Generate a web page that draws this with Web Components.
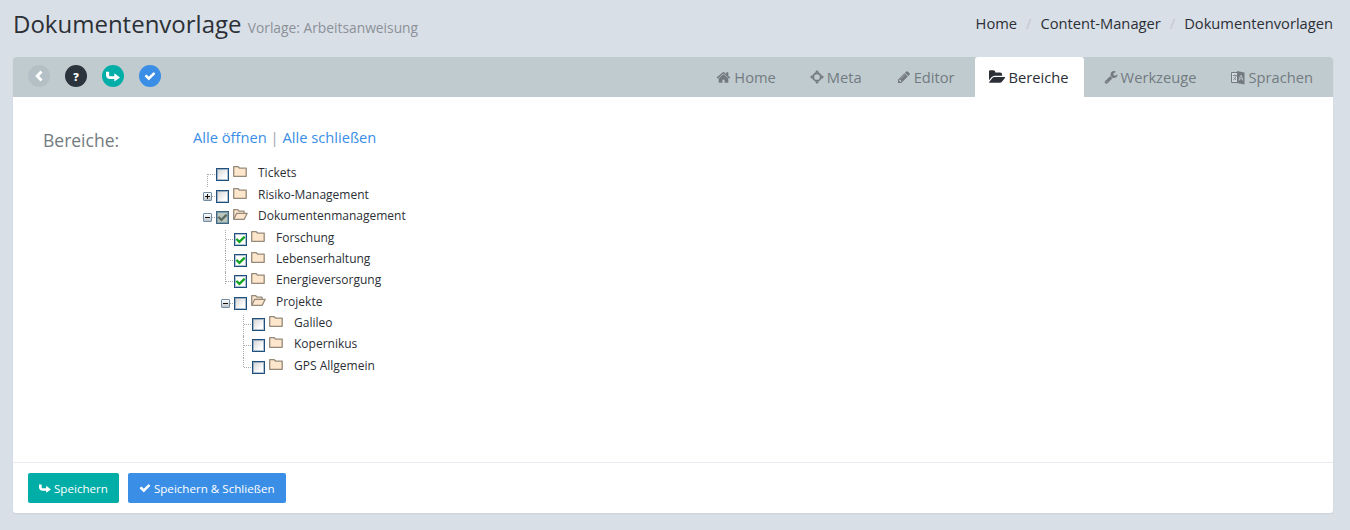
<!DOCTYPE html>
<html lang="de">
<head>
<meta charset="utf-8">
<title>Dokumentenvorlage</title>
<style>
  html, body { height: 100%; }
  body {
    margin: 0;
    background: #d9dfe7;
    color: #2b2f36;
    font-family: "Open Sans", sans-serif;
  }
</style>
</head>
<body>
<template-page></template-page>

<script>
const ICONS = {
  home: "M1472 992v480q0 26-19 45t-45 19h-384v-384h-256v384h-384q-26 0-45-19t-19-45v-480q0-1 .5-3t.5-3l575-474 575 474q1 2 1 6zm223-69l-62 74q-8 9-21 11h-3q-13 0-21-7l-692-577-692 577q-12 8-24 7-13-2-21-11l-62-74q-8-10-7-23.5t11-21.5l719-599q32-26 76-26t76 26l244 204v-195q0-14 9-23t23-9h192q14 0 23 9t9 23v408l219 182q10 8 11 21.5t-7 23.5z",
  pencil: "M491 1536l91-91-235-235-91 91v107h128v128h107zm523-928q0-22-22-22-10 0-17 7l-542 542q-7 7-7 17 0 22 22 22 10 0 17-7l542-542q7-7 7-17zm-54-192l416 416-832 832h-416v-416zm683 96q0 53-37 90l-166 166-416-416 166-165q36-38 90-38 53 0 91 38l235 234q37 39 37 91z",
  folder: "M1815 952q0 31-31 66l-336 396q-43 51-120.5 86.5t-143.5 35.5h-1088q-34 0-60.5-13t-26.5-43q0-31 31-66l336-396q43-51 120.5-86.5t143.5-35.5h1088q34 0 60.5 13t26.5 43zm-343-344v160h-832q-94 0-197 47.5t-164 119.5l-337 396-5 6q0-4-.5-12.5t-.5-12.5v-960q0-92 66-158t158-66h320q92 0 158 66t66 158v32h544q92 0 158 66t66 158z",
  wrench: "M448 1472q0-26-19-45t-45-19-45 19-19 45 19 45 45 19 45-19 19-45zm644-420l-682 682q-37 37-90 37-52 0-91-37l-106-108q-38-36-38-90 0-53 38-91l681-681q39 98 114.5 173.5t173.5 114.5zm634-435q0 39-23 106-47 134-164.5 217.5t-258.5 83.5q-185 0-316.5-131.5t-131.5-316.5 131.5-316.5 316.5-131.5q58 0 121.5 16.5t107.5 46.5q16 11 16 28t-16 28l-293 169v224l193 107q5-3 79-48.5t135.5-81 70.5-35.5q15 0 23.5 10t8.5 25z",
  check: "M1671 566q0 40-28 68l-724 724-136 136q-28 28-68 28t-68-28l-136-136-362-362q-28-28-28-68t28-68l136-136q28-28 68-28t68 28l294 295 656-657q28-28 68-28t68 28l136 136q28 28 28 68z"
};

const faIcon = (name, size) =>
  `<svg width="${size}" height="${size}" viewBox="0 0 1792 1792" fill="currentColor"><path d="${ICONS[name]}"/></svg>`;

// hooked arrow used on the save buttons
const shareIcon = (w, h) =>
  `<svg width="${w}" height="${h}" viewBox="0 0 16 12" fill="currentColor"><path d="M0 .5h3.600v3.700c0 1 .5 1.500 1.500 1.500H9.500V2.200L16 7.200l-6.500 4.600V8.900H5C1.800 8.900 0 7.100 0 4.600z"/></svg>`;

const metaIcon =
  `<svg width="14" height="14" viewBox="0 0 14 14"><circle cx="7" cy="7" r="3.800" fill="none" stroke="currentColor" stroke-width="1.900"/><path fill="currentColor" d="M7 0l2.200 2.600H4.800zM7 14l-2.200-2.600h4.400zM0 7l2.600-2.200v4.400zM14 7l-2.600 2.200V4.800z"/></svg>`;

const languageIcon =
  `<svg width="14" height="15" viewBox="0 0 14 15"><path d="M.5 2.500h6.500v10H.5z" fill="#d5dcdf" stroke="currentColor"/><path d="M6 1l7.500 1.500v12L6 13z" fill="currentColor"/><path d="M8 10.500l1.500-5h.8l1.500 5M8.600 8.800h2.600" fill="none" stroke="#c0cbd0" stroke-width=".9"/><path d="M1.800 5.500h4M3.800 4.500v1M2.200 10c1.600-.8 2.500-2.300 3-4.500M2.600 7.300c.6 1.100 1.300 2 2.600 2.700" fill="none" stroke="currentColor" stroke-width=".8"/></svg>`;

class TemplatePage extends HTMLElement {
  constructor() {
    super();
    this.attachShadow({ mode: "open" });
    this.shadowRoot.innerHTML = `
      <style>
        :host { display: block; padding: 0 17px 0 13px; }
      </style>
      <page-header></page-header>
      <editor-card></editor-card>
    `;
  }
}

class PageHeader extends HTMLElement {
  constructor() {
    super();
    this.attachShadow({ mode: "open" });
    this.shadowRoot.innerHTML = `
      <style>
        :host {
          display: flex;
          justify-content: space-between;
          align-items: flex-start;
          height: 57px;
        }
        h1 {
          margin: 7px 0 0;
          font-size: 24px;
          line-height: 33px;
          font-weight: 400;
          color: #2b2f36;
        }
        small { font-size: 13.800px; color: #8b9197; }
        ol {
          display: flex;
          margin: 13px 0 0;
          padding: 0;
          list-style: none;
          font-size: 14.700px;
          line-height: 20px;
          color: #2b2f36;
        }
        li + li::before { content: "/"; padding: 0 9px; color: #c3c8ce; }
      </style>
      <h1>Dokumentenvorlage <small>Vorlage: Arbeitsanweisung</small></h1>
      <ol>
        <li>Home</li>
        <li>Content-Manager</li>
        <li>Dokumentenvorlagen</li>
      </ol>
    `;
  }
}

class CircleButton extends HTMLElement {
  constructor() {
    super();
    this.attachShadow({ mode: "open" });
    this.shadowRoot.innerHTML = `
      <style>
        :host {
          display: flex;
          align-items: center;
          justify-content: center;
          width: 22px;
          height: 22px;
          border-radius: 50%;
          color: #fff;
          background: var(--bg, #2b343c);
        }
      </style>
      <slot></slot>
    `;
  }
}

class TabBar extends HTMLElement {
  constructor() {
    super();
    this.attachShadow({ mode: "open" });
    this.shadowRoot.innerHTML = `
      <style>
        :host {
          display: flex;
          justify-content: space-between;
          height: 40px;
          background: #c0cbd0;
          border-radius: 3px 3px 0 0;
        }
        .actions { display: flex; gap: 15px; padding: 8px 0 0 15px; }
        .tabs { display: flex; padding-right: 5px; }
      </style>
      <div class="actions">
        <circle-button style="--bg:#b4c0c6">
          <svg width="11" height="12" viewBox="0 0 11 12"><path d="M7.500 1.500L3.200 6l4.300 4.500" fill="none" stroke="#fff" stroke-width="2.800"/></svg>
        </circle-button>
        <circle-button style="--bg:#2b343c"><span style="font:800 11px 'Open Sans',sans-serif">?</span></circle-button>
        <circle-button style="--bg:#00ada7">${shareIcon(14, 11)}</circle-button>
        <circle-button style="--bg:#3a8ee6">${faIcon("check", 12)}</circle-button>
      </div>
      <div class="tabs">
        <tab-item>${faIcon("home", 15)}Home</tab-item>
        <tab-item style="margin-left:5px">${metaIcon}Meta</tab-item>
        <tab-item>${faIcon("pencil", 14)}Editor</tab-item>
        <tab-item active style="margin-left:5px;gap:4px">${faIcon("folder", 16)}Bereiche</tab-item>
        <tab-item>${faIcon("wrench", 14)}Werkzeuge</tab-item>
        <tab-item>${languageIcon}Sprachen</tab-item>
      </div>
    `;
  }
}

class TabItem extends HTMLElement {
  constructor() {
    super();
    this.attachShadow({ mode: "open" });
    this.shadowRoot.innerHTML = `
      <style>
        :host {
          display: flex;
          align-items: center;
          gap: 3px;
          padding: 0 15px 0 14px;
          margin-left: 6px;
          font-size: 14.700px;
          color: #737b80;
          border-radius: 3px 3px 0 0;
        }
        :host([active]) { background: #fff; color: #2b2f36; }
      </style>
      <slot></slot>
    `;
  }
}

class TreeNode extends HTMLElement {
  static get observedAttributes() {
    return ["label"];
  }

  constructor() {
    super();
    this.attachShadow({ mode: "open" });
    const open = this.hasAttribute("open");
    const toggle = this.getAttribute("toggle");
    const state = this.getAttribute("state");
    const folder = open
      ? `<path d="M1.700 11.300V1.700h4l1.500 1.500h4.800v2.200" fill="#fde6cc"/><path d="M1.700 11.300l3-6h10.500l-3 6z" fill="#fde6cc"/>`
      : `<path d="M1.700 11.300V1.700h4.500l1.500 1.500h6.500v8.100z" fill="#fde6cc"/>`;
    this.shadowRoot.innerHTML = `
      <style>
        :host { display: block; position: relative; }
        :host::before {
          content: "";
          position: absolute;
          left: 9px;
          top: 0;
          bottom: 0;
          border-left: 1px dotted #a4a9ae;
        }
        :host(:last-child)::before { bottom: auto; height: 9px; }
        :host([first])::before { top: 9px; }
        :host([stub])::before { bottom: auto; height: 12px; }
        :host([toggle])::before { display: none; }
        .row {
          display: flex;
          align-items: flex-start;
          height: 21.380px;
          font-size: 12px;
          line-height: 17px;
          color: #2b2f36;
          position: relative;
        }
        .gutter { position: relative; width: 18px; height: 100%; flex: none; }
        .gutter::before {
          content: "";
          position: absolute;
          left: 10px;
          right: 1px;
          top: 9px;
          border-top: 1px dotted #a4a9ae;
        }
        .toggle {
          position: absolute;
          left: 5px;
          top: 5px;
          box-sizing: border-box;
          width: 9px;
          height: 9px;
          border: 1px solid #6f8ba5;
          border-radius: 1px;
          background: linear-gradient(#fff, #bfc5ca);
          display: flex;
          z-index: 1;
        }
        .toggle svg { display: block; }
        .box {
          flex: none;
          box-sizing: border-box;
          width: 13px;
          height: 13px;
          margin-top: 3px;
          border: 1px solid #1f4f7d;
          box-shadow: inset 0 0 0 1px rgba(31, 79, 125, .35);
          background: linear-gradient(135deg, #d2d2d2, #fff 75%);
          display: flex;
          align-items: center;
          justify-content: center;
        }
        .box.checked { background: #fff; color: #12a320; }
        .box.partial { background: #b9c8bf; color: #5e6b63; border-color: #3f6781; }
        .folder { flex: none; margin: 0 0 0 3px; stroke: #95897a; stroke-width: 1.300; stroke-linejoin: round; }
        .label { margin: -1px 0 0 10px; white-space: nowrap; }
        .children { padding-left: 18px; }
      </style>
      <div class="row">
        <div class="gutter">
          ${toggle ? `<span class="toggle"><svg width="7" height="7" viewBox="0 0 7 7"><path d="M1 3.500h5${toggle === "plus" ? "M3.500 1v5" : ""}" stroke="#111" stroke-width="1"/></svg></span>` : ""}
        </div>
        <span class="box ${state || ""}">${state ? faIcon("check", 11) : ""}</span>
        <svg class="folder" width="16" height="13" viewBox="0 0 16 13">${folder}</svg>
        <span class="label"></span>
      </div>
      <div class="children"><slot></slot></div>
    `;
    this.labelEl = this.shadowRoot.querySelector(".label");
  }

  attributeChangedCallback(name, oldValue, newValue) {
    this.labelEl.textContent = newValue;
  }
}

class AreaTree extends HTMLElement {
  constructor() {
    super();
    this.attachShadow({ mode: "open" });
    this.shadowRoot.innerHTML = `
      <style>
        :host { display: block; margin: 0 0 0 5px; }
      </style>
      <slot></slot>
    `;
  }
}

class EditorCard extends HTMLElement {
  constructor() {
    super();
    this.attachShadow({ mode: "open" });
    this.shadowRoot.innerHTML = `
      <style>
        :host {
          display: flex;
          flex-direction: column;
          height: 456px;
          background: #fff;
          border-radius: 3px;
          box-shadow: 0 1px 2px rgba(0, 0, 0, .06);
        }
        .body { flex: 1; display: flex; padding: 29px 30px 0; }
        .title {
          width: 150px;
          flex: none;
          margin-top: 1px;
          font-size: 17.500px;
          line-height: 26px;
          color: #737b80;
        }
        .links {
          font-size: 14.700px;
          line-height: 22px;
          color: #a0a5aa;
          margin-bottom: 17.400px;
        }
        .links a { color: #3a8ee6; text-decoration: none; }
        .footer {
          display: flex;
          gap: 9px;
          padding: 10px 15px;
          border-top: 1px solid #e9edf1;
        }
        .btn {
          display: flex;
          align-items: center;
          gap: 3px;
          height: 30px;
          padding: 0 11px;
          border-radius: 2px;
          font-size: 11.600px;
          color: #fff;
        }
      </style>
      <tab-bar></tab-bar>
      <div class="body">
        <div class="title">Bereiche:</div>
        <div>
          <div class="links"><a>Alle öffnen</a> | <a>Alle schließen</a></div>
          <area-tree>
            <tree-node label="Tickets" first></tree-node>
            <tree-node label="Risiko-Management" toggle="plus"></tree-node>
            <tree-node label="Dokumentenmanagement" toggle="minus" open state="partial">
              <tree-node label="Forschung" state="checked"></tree-node>
              <tree-node label="Lebenserhaltung" state="checked"></tree-node>
              <tree-node label="Energieversorgung" state="checked" stub></tree-node>
              <tree-node label="Projekte" toggle="minus" open>
                <tree-node label="Galileo"></tree-node>
                <tree-node label="Kopernikus"></tree-node>
                <tree-node label="GPS Allgemein"></tree-node>
              </tree-node>
            </tree-node>
          </area-tree>
        </div>
      </div>
      <div class="footer">
        <div class="btn" style="background:#00ada7">${shareIcon(12, 11)}Speichern</div>
        <div class="btn" style="background:#3a8ee6">${faIcon("check", 12)}Speichern &amp; Schließen</div>
      </div>
    `;
  }
}

customElements.define("tree-node", TreeNode);
customElements.define("area-tree", AreaTree);
customElements.define("tab-item", TabItem);
customElements.define("tab-bar", TabBar);
customElements.define("circle-button", CircleButton);
customElements.define("page-header", PageHeader);
customElements.define("editor-card", EditorCard);
customElements.define("template-page", TemplatePage);
</script>
</body>
</html>
